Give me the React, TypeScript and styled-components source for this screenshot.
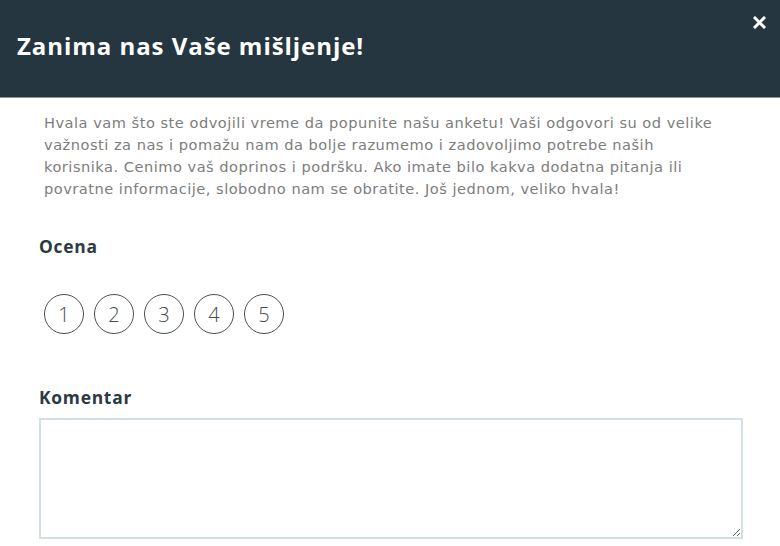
import React from "react";
import styled, { createGlobalStyle } from "styled-components";

const Global = createGlobalStyle`
  html, body { margin: 0; padding: 0; background: #ffffff; }
  body { font-family: "Open Sans", "Noto Sans", sans-serif; }
  * { box-sizing: border-box; }
`;

const Modal = styled.div`
  width: 780px;
  height: 546px;
  overflow: hidden;
  background: #ffffff;
`;

const Header = styled.header`
  position: relative;
  height: 98px;
  background: #253640;
  border-bottom: 1px solid #8a949a;
  display: flex;
  align-items: center;
  padding: 0 17px;
`;

const Title = styled.h1`
  margin: 0;
  margin-top: -6px;
  font-family: "Open Sans", "Noto Sans", sans-serif;
  font-weight: 700;
  font-size: 24px;
  letter-spacing: 0.95px;
  color: #ffffff;
`;

const Close = styled.button`
  position: absolute;
  top: 11px;
  right: 12px;
  width: 18px;
  height: 22px;
  padding: 0;
  border: none;
  background: transparent;
  color: #ffffff;
  display: flex;
  align-items: center;
  justify-content: center;
  cursor: pointer;
`;

const Body = styled.div`
  padding: 14px 37px 0 39px;
`;

const Intro = styled.p`
  margin: 0 0 0 5px;
  max-width: 676px;
  font-family: "DejaVu Sans", "Open Sans", sans-serif;
  font-size: 14.6px;
  line-height: 22px;
  color: #7d7d7d;
  letter-spacing: 0.5px;
`;

const Label = styled.h2`
  margin: 0;
  font-size: 17.4px;
  font-weight: 700;
  color: #2b3a42;
  letter-spacing: 0.75px;
`;

const RatingLabel = styled(Label)`
  margin-top: 34px;
`;

const CommentLabel = styled(Label)`
  margin-top: 51px;
`;

const Ratings = styled.div`
  display: flex;
  gap: 10px;
  margin: 36px 0 0 5px;
`;

const RateButton = styled.button`
  width: 40px;
  height: 40px;
  border-radius: 50%;
  border: 1px solid #4a4f52;
  background: #ffffff;
  padding: 0;
  font-family: "Open Sans", "Noto Sans", sans-serif;
  font-size: 20px;
  font-weight: 300;
  color: #444a4e;
  display: flex;
  align-items: center;
  justify-content: center;
  cursor: pointer;
`;

const Comment = styled.textarea`
  display: block;
  margin-top: 9px;
  width: 704px;
  height: 121px;
  border: 2px solid #d3dfe5;
  border-radius: 0;
  resize: vertical;
  font-family: "Open Sans", "Noto Sans", sans-serif;
  font-size: 14px;
  outline: none;
`;

export default function App() {
  return (
    <Modal>
      <Global />
      <Header>
        <Title>Zanima nas Vaše mišljenje!</Title>
        <Close aria-label="Zatvori">
          <svg width="13" height="13" viewBox="0 0 13 13">
            <path d="M2 2 L11 11 M11 2 L2 11" stroke="#fff" strokeWidth="3" strokeLinecap="square" />
          </svg>
        </Close>
      </Header>
      <Body>
        <Intro>
          Hvala vam što ste odvojili vreme da popunite našu anketu! Vaši odgovori su od velike
          važnosti za nas i pomažu nam da bolje razumemo i zadovoljimo potrebe naših korisnika.
          Cenimo vaš doprinos i podršku. Ako imate bilo kakva dodatna pitanja ili povratne
          informacije, slobodno nam se obratite. Još jednom, veliko hvala!
        </Intro>
        <RatingLabel>Ocena</RatingLabel>
        <Ratings>
          {[1, 2, 3, 4, 5].map((n) => (
            <RateButton key={n}>{n}</RateButton>
          ))}
        </Ratings>
        <CommentLabel>Komentar</CommentLabel>
        <Comment />
      </Body>
    </Modal>
  );
}
